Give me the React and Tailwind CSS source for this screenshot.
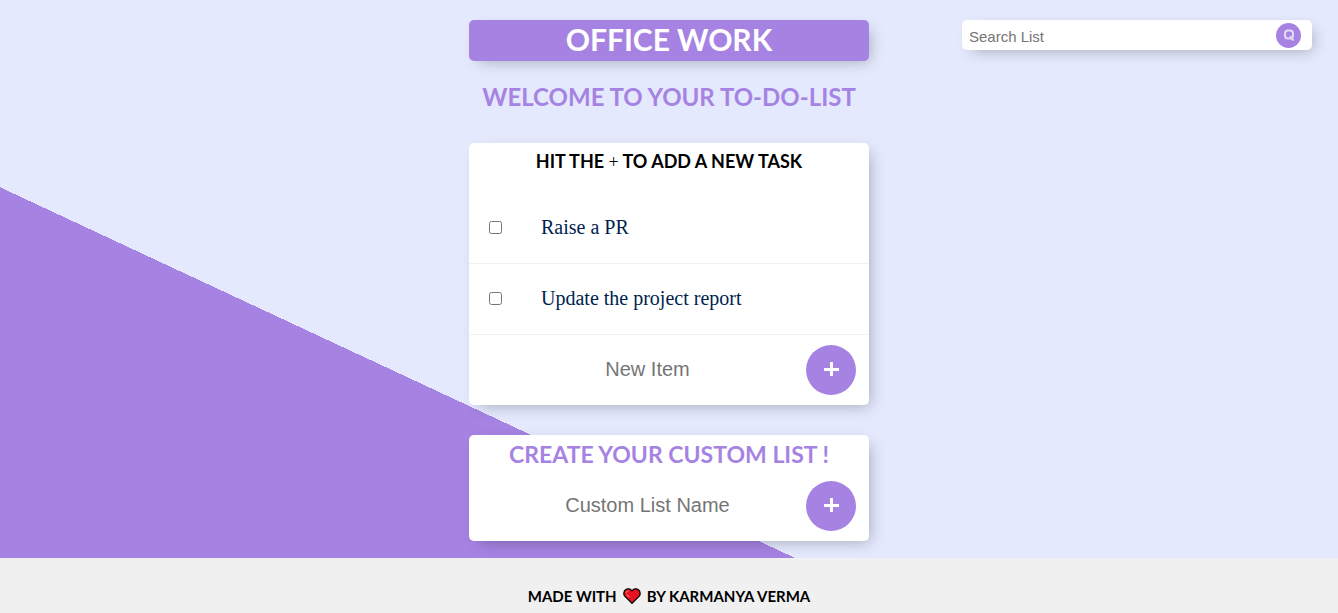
import { useState } from "react";

const initialTasks = ["Raise a PR", "Update the project report"];

function AddButton({ label }) {
  return (
    <button
      type="submit"
      aria-label={label}
      className="mr-[13px] flex size-[50px] shrink-0 items-center justify-center rounded-full bg-[#a683e3] text-white"
    >
      <svg viewBox="0 0 16 16" className="size-4" aria-hidden="true">
        <path d="M8.5 0V14M1 7.5H16" stroke="currentColor" strokeWidth="3" fill="none" />
      </svg>
    </button>
  );
}

function AddForm({ id, placeholder, buttonLabel, onAdd }) {
  const [value, setValue] = useState("");
  const submit = (event) => {
    event.preventDefault();
    if (value.trim()) onAdd(value.trim());
    setValue("");
  };
  return (
    <form onSubmit={submit} className="flex h-[70px] items-center">
      <input
        id={id}
        type="text"
        aria-label={placeholder}
        autoComplete="off"
        placeholder={placeholder}
        value={value}
        onChange={(event) => setValue(event.target.value)}
        className="h-[60px] min-w-0 flex-1 bg-transparent pb-0.5 pl-5 text-center font-['Liberation_Sans',Arial,sans-serif] text-xl font-normal text-[#001f3f] outline-none placeholder:text-[#757575]"
      />
      <AddButton label={buttonLabel} />
    </form>
  );
}

function Heart() {
  return (
    <svg viewBox="0 0 18 16" className="h-4 w-[18px]" role="img" aria-label="love">
      <path
        d="M9 15.2 2 8.4C.3 6.6.5 3.2 2.6 1.7 4.7.2 7.5.8 9 3 10.5.8 13.3.2 15.4 1.7 17.5 3.2 17.7 6.6 16 8.4Z"
        fill="#e81224"
        stroke="#000"
        strokeWidth="1.3"
        strokeLinejoin="round"
      />
      <path d="M3.3 5.2C3.3 3.6 4.5 2.8 5.6 3" stroke="#f4664f" strokeWidth="1.2" fill="none" />
      <path d="M3.6 6.5 6.5 9.2" stroke="#f4664f" strokeWidth="1.4" fill="none" />
    </svg>
  );
}

export default function App() {
  const [title, setTitle] = useState("Office Work");
  const [tasks, setTasks] = useState(initialTasks);

  return (
    <div className="flex min-h-screen flex-col font-[Lato,sans-serif] font-bold text-black">
      <main className="grid flex-1 grid-cols-[1fr_400px_1fr] content-start bg-[linear-gradient(25deg,#a683e3_336px,#e4e9fd_336px)] pt-5 pb-4">
        <div className="col-start-2">
          <h1 className="rounded-[5px] bg-[#a683e3] pb-[3px] text-center text-[30px] leading-[38px] text-white uppercase shadow-[5px_5px_15px_-5px_rgba(0,0,0,0.3)]">
            {title}
          </h1>
          <h2 className="mt-5 text-center text-2xl text-[#a683e3] uppercase">
            Welcome to your to-do-list
          </h2>

          <section className="mt-[30px] rounded-[5px] bg-white shadow-[5px_5px_15px_-5px_rgba(0,0,0,0.3)]">
            <h3 className="h-[50px] text-center text-lg leading-9 uppercase">
              Hit the{" "}
              <span className="font-['Liberation_Serif',serif] font-normal">+</span> to
              add a new task
            </h3>
            <ul>
              {tasks.map((task, index) => (
                <li key={index} className="border-b border-[#f1f1f1]">
                  <label className="flex h-[70px] items-center gap-[39px] pb-0.5 pl-5 font-['Liberation_Serif','Times_New_Roman',serif] text-xl font-normal text-[#001f4f]">
                    <input type="checkbox" className="size-[13px]" />
                    {task}
                  </label>
                </li>
              ))}
            </ul>
            <AddForm
              id="new-item"
              placeholder="New Item"
              buttonLabel="Add item"
              onAdd={(item) => setTasks([...tasks, item])}
            />
          </section>

          <section className="mt-[30px] rounded-[5px] bg-white shadow-[5px_5px_15px_-5px_rgba(0,0,0,0.3)]">
            <h2 className="h-9 text-center text-[23px] leading-[38px] text-[#a683e3] uppercase">
              Create your custom list !
            </h2>
            <AddForm
              id="list-name"
              placeholder="Custom List Name"
              buttonLabel="Create list"
              onAdd={setTitle}
            />
          </section>
        </div>

        <form
          role="search"
          onSubmit={(event) => event.preventDefault()}
          className="mr-[26px] flex h-[30px] w-[350px] items-center self-start justify-self-end rounded-[5px] bg-white pr-[11px] pl-[7px] shadow-[5px_5px_15px_-5px_rgba(0,0,0,0.3)]"
        >
          <input
            id="search"
            type="text"
            aria-label="Search List"
            placeholder="Search List"
            className="min-w-0 flex-1 bg-transparent pt-1 font-['Liberation_Sans',Arial,sans-serif] text-[15px] font-normal outline-none placeholder:text-[#757575]"
          />
          <button
            type="submit"
            aria-label="Search"
            className="flex size-[25px] items-center justify-center rounded-full bg-[#a683e3] text-[#e4d9f7]"
          >
            <svg viewBox="0 0 12 12" className="size-3" fill="none" stroke="currentColor" aria-hidden="true">
              <rect x="2" y="1.5" width="8" height="8" rx="3" strokeWidth="2" />
              <path d="M7 7 10.6 11.6" strokeWidth="2" />
            </svg>
          </button>
        </form>
      </main>

      <footer className="flex h-[55px] items-center justify-center gap-1.5 bg-[#f0f0f0] pt-5 text-[15px] leading-5 uppercase">
        <span>Made with</span>
        <Heart />
        <span>by Karmanya Verma</span>
      </footer>
    </div>
  );
}
